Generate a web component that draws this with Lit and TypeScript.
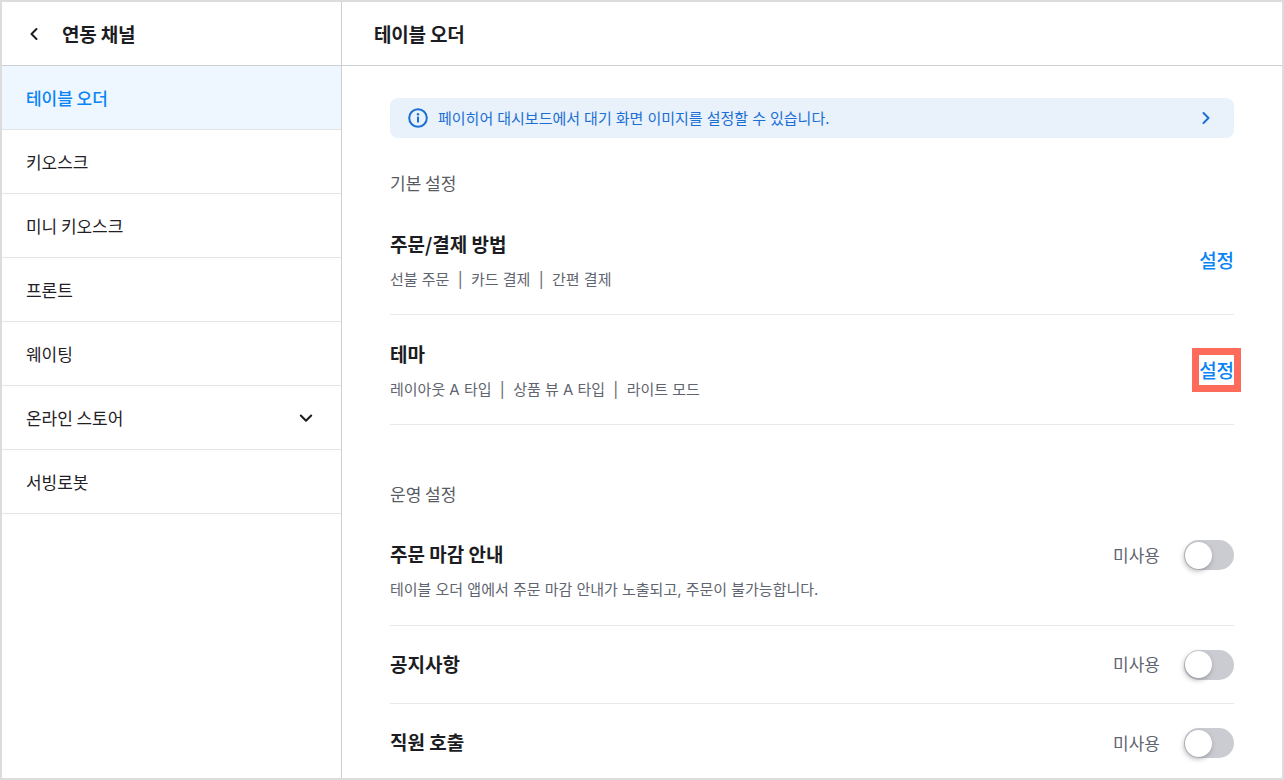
import { LitElement, html, css, svg } from "lit";
import { customElement } from "lit/decorators.js";

const NAV = ["테이블 오더", "키오스크", "미니 키오스크", "프론트", "웨이팅", "온라인 스토어", "서빙로봇"];

@customElement("app-root")
export class AppRoot extends LitElement {
  static styles = css`
    :host {
      display: block;
      width: 1284px;
      height: 780px;
      box-sizing: border-box;
      overflow: hidden;
      font-family: "Noto Sans CJK KR", "Noto Sans", sans-serif;
      color: #1b1d22;
      background: #fff;
    }
    .frame {
      box-sizing: border-box;
      width: 1284px;
      height: 780px;
      border: 2px solid #dcdcdc;
      display: flex;
      background: #fff;
    }
    .side {
      width: 340px;
      flex: none;
      box-sizing: border-box;
      border-right: 1px solid #cdcfd3;
    }
    .head {
      height: 64px;
      box-sizing: border-box;
      border-bottom: 1px solid #cdcfd3;
      display: flex;
      align-items: center;
      font-size: 19px;
      font-weight: 700;
      letter-spacing: -0.2px;
    }
    .head span { display: block; padding-bottom: 1px; }
    .nav-item span { display: block; padding-bottom: 1px; }
    .side .head { padding-left: 24px; gap: 20px; }
    .side .head svg { width: 16px; height: 16px; flex: none; }
    .main { flex: 1; min-width: 0; display: flex; flex-direction: column; }
    .main .head { padding-left: 32px; }
    .nav-item {
      height: 64px;
      box-sizing: border-box;
      border-bottom: 1px solid #e4e5e7;
      padding: 0 27px 0 24px;
      display: flex;
      align-items: center;
      justify-content: space-between;
      font-size: 17px;
      letter-spacing: -0.05px;
      color: #1f2126;
    }
    .nav-item.active {
      background: #eef7ff;
      color: #0a84f5;
      font-weight: 500;
    }
    .nav-item svg { width: 16px; height: 16px; }
    .content { padding: 32px 48px 0; flex: 1; overflow: hidden; }
    .banner {
      height: 40px;
      box-sizing: border-box;
      border-radius: 8px;
      background: #e9f1fb;
      padding: 0 20px 0 18px;
      display: flex;
      align-items: center;
      gap: 10px;
      font-size: 15px;
      word-spacing: 0.7px;
      color: #1a6fd4;
    }
    .banner span { flex: 1; padding-bottom: 1px; }
    .banner svg { flex: none; }
    .section {
      font-size: 17px;
      color: #575b62;
      line-height: 22px;
    }
    .s1 { margin-top: 34px; margin-bottom: 11px; }
    .s2 { margin-top: 58px; margin-bottom: 11px; }
    .row {
      display: flex;
      align-items: center;
      justify-content: space-between;
      box-sizing: border-box;
      border-bottom: 1px solid #e8e9eb;
    }
    .row.tall { height: 110px; }
    .row.short { height: 78px; }
    .row.top { align-items: flex-start; padding-top: 24px; }
    .row.last { border-bottom: none; }
    .title {
      font-size: 19px;
      font-weight: 700;
      line-height: 28px;
      padding-bottom: 3px;
    }
    .row.short .title { padding-bottom: 2px; }
    .sub {
      margin-top: 8px;
      margin-bottom: -1px;
      padding-top: 1px;
      font-family: Inter, "Noto Sans CJK KR", sans-serif;
      font-size: 15px;
      line-height: 20px;
      color: #5f6570;
      word-spacing: -0.05px;
      white-space: pre;
    }
    .link {
      width: 35px;
      height: 30px;
      padding-bottom: 1px;
      box-sizing: border-box;
      display: flex;
      align-items: center;
      justify-content: center;
      font-size: 19px;
      font-weight: 500;
      color: #0a84f5;
      letter-spacing: -0.3px;
      white-space: nowrap;
    }
    .link.mark { outline: 7px solid #ff6b5a; }
    .state { display: flex; align-items: center; gap: 24px; }
    .state span { font-size: 17px; color: #5f6570; padding-bottom: 2px; }
    .toggle {
      width: 50px;
      height: 30px;
      border-radius: 15px;
      background: #cbccd2;
      display: flex;
      align-items: center;
      padding: 0 0 0 1px;
      box-sizing: border-box;
    }
    .knob {
      width: 27px;
      height: 27px;
      border-radius: 50%;
      background: #fff;
      box-shadow: -1px 2px 5px rgba(40, 42, 50, 0.35);
    }
  `;

  private chev(d: string, color: string, w = 2) {
    return svg`<path d=${d} fill="none" stroke=${color} stroke-width=${w} stroke-linecap="round" stroke-linejoin="round"/>`;
  }

  private toggleRow(title: string, sub: string, cls: string) {
    return html`<div class="row ${cls}">
      <div>
        <div class="title">${title}</div>
        ${sub ? html`<div class="sub">${sub}</div>` : ""}
      </div>
      <div class="state"><span>미사용</span><div class="toggle"><div class="knob"></div></div></div>
    </div>`;
  }

  render() {
    return html`<div class="frame">
      <aside class="side">
        <div class="head">
          <svg viewBox="0 0 16 16">${this.chev("M10.500 3 5.500 8l5 5", "#1b1d22")}</svg>
          <span>연동 채널</span>
        </div>
        ${NAV.map(
          (n, i) => html`<div class="nav-item ${i === 0 ? "active" : ""}">
            <span>${n}</span>
            ${n === "온라인 스토어"
              ? html`<svg viewBox="0 0 16 16">${this.chev("M2.800 5.500 8 10.700l5.200-5.200", "#1b1d22")}</svg>`
              : ""}
          </div>`
        )}
      </aside>
      <main class="main">
        <div class="head"><span>테이블 오더</span></div>
        <div class="content">
          <div class="banner">
            <svg width="20" height="20" viewBox="0 0 20 20">
              <circle cx="10" cy="10" r="8.800" fill="none" stroke="#1a6fd4" stroke-width="2"/>
              <circle cx="10" cy="6.200" r="1.200" fill="#1a6fd4"/>
              <rect x="9" y="8.500" width="2" height="6" rx="0.500" fill="#1a6fd4"/>
            </svg>
            <span>페이히어 대시보드에서 대기 화면 이미지를 설정할 수 있습니다.</span>
            <svg width="16" height="16" viewBox="0 0 16 16">${this.chev("M5.500 3 10.500 8l-5 5", "#1a6fd4")}</svg>
          </div>
          <div class="section s1">기본 설정</div>
          <div class="row tall">
            <div>
              <div class="title">주문/결제 방법</div>
              <div class="sub">선불 주문  |  카드 결제  |  간편 결제</div>
            </div>
            <div class="link">설정</div>
          </div>
          <div class="row tall">
            <div>
              <div class="title">테마</div>
              <div class="sub">레이아웃 A 타입  |  상품 뷰 A 타입  |  라이트 모드</div>
            </div>
            <div class="link mark">설정</div>
          </div>
          <div class="section s2">운영 설정</div>
          ${this.toggleRow("주문 마감 안내", "테이블 오더 앱에서 주문 마감 안내가 노출되고, 주문이 불가능합니다.", "tall top")}
          ${this.toggleRow("공지사항", "", "short")}
          ${this.toggleRow("직원 호출", "", "short last")}
        </div>
      </main>
    </div>`;
  }
}
